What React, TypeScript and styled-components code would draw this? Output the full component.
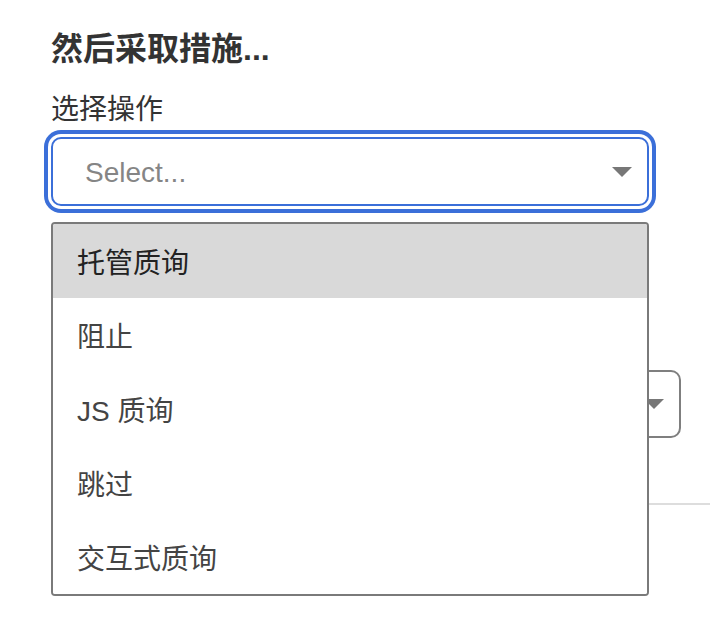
import styled, { createGlobalStyle } from 'styled-components';

const GlobalStyle = createGlobalStyle`
  html, body {
    margin: 0;
    padding: 0;
    background: #ffffff;
  }

  body {
    font-family: 'Liberation Sans', 'Noto Sans CJK SC', sans-serif;
    color: #333333;
  }
`;

const Page = styled.div`
  position: relative;
  width: 710px;
  height: 634px;
  overflow: hidden;
  box-sizing: border-box;
  padding-left: 51px;
`;

const Heading = styled.h2`
  margin: 30px 0 0;
  font-size: 32px;
  line-height: 38px;
  font-weight: 700;
  color: #333333;
`;

const Label = styled.div`
  margin-top: 25px;
  font-size: 28px;
  line-height: 34px;
  color: #333333;
`;

const SelectBox = styled.div<{ $focused?: boolean; $width: number }>`
  box-sizing: border-box;
  width: ${({ $width }) => $width}px;
  height: ${({ $focused }) => ($focused ? 69 : 68)}px;
  display: flex;
  align-items: center;
  justify-content: space-between;
  padding: 0 15px 0 32px;
  border-radius: 10px;
  background: #ffffff;
  border: 2px solid ${({ $focused }) => ($focused ? '#3b6fd9' : '#7f7f7f')};
  box-shadow: ${({ $focused }) =>
    $focused ? '0 0 0 3px #ffffff, 0 0 0 7px #3b6fd9' : 'none'};
`;

const FocusedSelect = styled(SelectBox)`
  margin-top: 10px;
`;

const Placeholder = styled.span`
  font-size: 28px;
  color: #858585;
  padding-top: 3px;
`;

const Caret = styled.span`
  width: 0;
  height: 0;
  border-left: 10px solid transparent;
  border-right: 10px solid transparent;
  border-top: 10px solid #777777;
`;

const FieldRow = styled.div`
  margin-top: 164px;
  display: flex;
  justify-content: flex-end;
  padding-right: 29px;
`;

const Divider = styled.div`
  margin-top: 65px;
  height: 2px;
  background: #dddddd;
`;

const Menu = styled.ul`
  position: absolute;
  top: 222px;
  left: 51px;
  width: 598px;
  box-sizing: border-box;
  margin: 0;
  padding: 0;
  list-style: none;
  background: #ffffff;
  border: 2px solid #7a7a7a;
  border-radius: 4px;
  overflow: hidden;
`;

const MenuItem = styled.li<{ $active?: boolean }>`
  height: 74px;
  display: flex;
  align-items: center;
  padding-left: 24px;
  font-size: 28px;
  color: ${({ $active }) => ($active ? '#222222' : '#444444')};
  background: ${({ $active }) => ($active ? '#d9d9d9' : '#ffffff')};
`;

const actions = ['托管质询', '阻止', 'JS 质询', '跳过', '交互式质询'];

const App = () => {
  return (
    <>
      <GlobalStyle />
      <Page>
        <Heading>然后采取措施...</Heading>
        <Label>选择操作</Label>
        <FocusedSelect $focused $width={598}>
          <Placeholder>Select...</Placeholder>
          <Caret />
        </FocusedSelect>

        <FieldRow>
          <SelectBox $width={315}>
            <Placeholder />
            <Caret />
          </SelectBox>
        </FieldRow>
        <Divider />

        <Menu>
          {actions.map((name, i) => (
            <MenuItem key={name} $active={i === 0}>
              {name}
            </MenuItem>
          ))}
        </Menu>
      </Page>
    </>
  );
};

export default App;
